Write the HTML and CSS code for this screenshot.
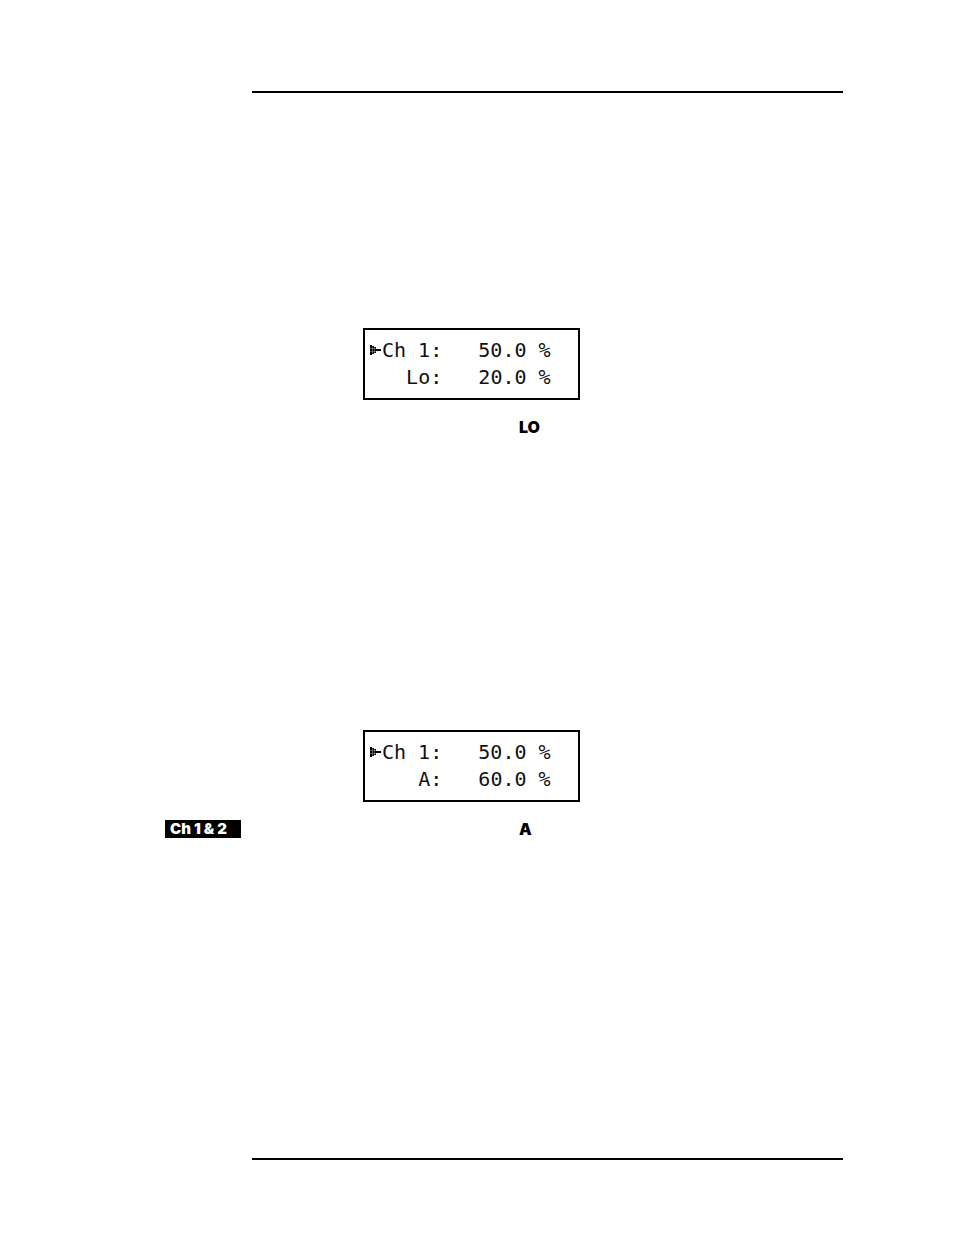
FILE: index.html
```
<!DOCTYPE html>
<html lang="en">
<head>
    <meta charset="UTF-8">
    <meta name="viewport" content="width=device-width, initial-scale=1.0">
    <title>Channel Display</title>
    <link rel="stylesheet" href="styles.css">
</head>
<body>
    <main class="page">
        <section class="entry">
            <div class="content">
                <div class="lcd">
                    <div class="lcd-line"><svg class="pointer" viewBox="0 0 12 12" aria-hidden="true"><path d="M0 1h2v1h2v1h2v2h5v2h-5v2h-2v1h-2v1h-2z"/><path class="gap" d="M2.5 1v10M4.5 1v10M0 4.5h6M0 7.5h6"/></svg>Ch 1:   50.0 %</div>
                    <div class="lcd-line">   Lo:   20.0 %</div>
                </div>
                <p class="name">LO</p>
            </div>
        </section>

        <section class="entry">
            <div class="side"><span class="tag">Ch 1 &amp; 2</span></div>
            <div class="content">
                <div class="lcd">
                    <div class="lcd-line"><svg class="pointer" viewBox="0 0 12 12" aria-hidden="true"><path d="M0 1h2v1h2v1h2v2h5v2h-5v2h-2v1h-2v1h-2z"/><path class="gap" d="M2.5 1v10M4.5 1v10M0 4.5h6M0 7.5h6"/></svg>Ch 1:   50.0 %</div>
                    <div class="lcd-line">    A:   60.0 %</div>
                </div>
                <p class="name">A</p>
            </div>
        </section>
    </main>
</body>
</html>
```
FILE: styles.css
```
body {
    margin: 0;
    background: #fff;
    color: #000;
    font-family: Inter, "Liberation Sans", sans-serif;
}
.page {
    margin: 91px 111px 75px 252px;
    padding: 235px 0 320px;
    border-top: 2px solid #000;
    border-bottom: 2px solid #000;
}
.entry {
    display: flex;
    align-items: flex-end;
}
.entry + .entry {
    margin-top: 294px;
}
.side {
    width: 87px;
    margin-left: -87px;
}
.tag {
    display: block;
    box-sizing: border-box;
    width: 76px;
    padding-left: 5px;
    background: #000;
    color: #fff;
    font-size: 15px;
    font-weight: 900;
    line-height: 18px;
    white-space: nowrap;
}
.content {
    flex: 1;
}
.lcd {
    box-sizing: border-box;
    width: 217px;
    margin-left: 111px;
    padding: 7px 5px;
    border: 2px solid #000;
}
.lcd-line {
    color: #111;
    font-family: "DejaVu Sans Mono", monospace;
    font-size: 20px;
    line-height: 27px;
    white-space: pre;
}
.pointer {
    width: 12px;
    height: 12px;
    fill: #000;
    vertical-align: 1px;
}
.pointer .gap {
    fill: none;
    stroke: #fff;
    stroke-width: 0.3;
}
.name {
    margin: 18px 0 0 267px;
    font-size: 16px;
    font-weight: 900;
    line-height: 18px;
}
```
